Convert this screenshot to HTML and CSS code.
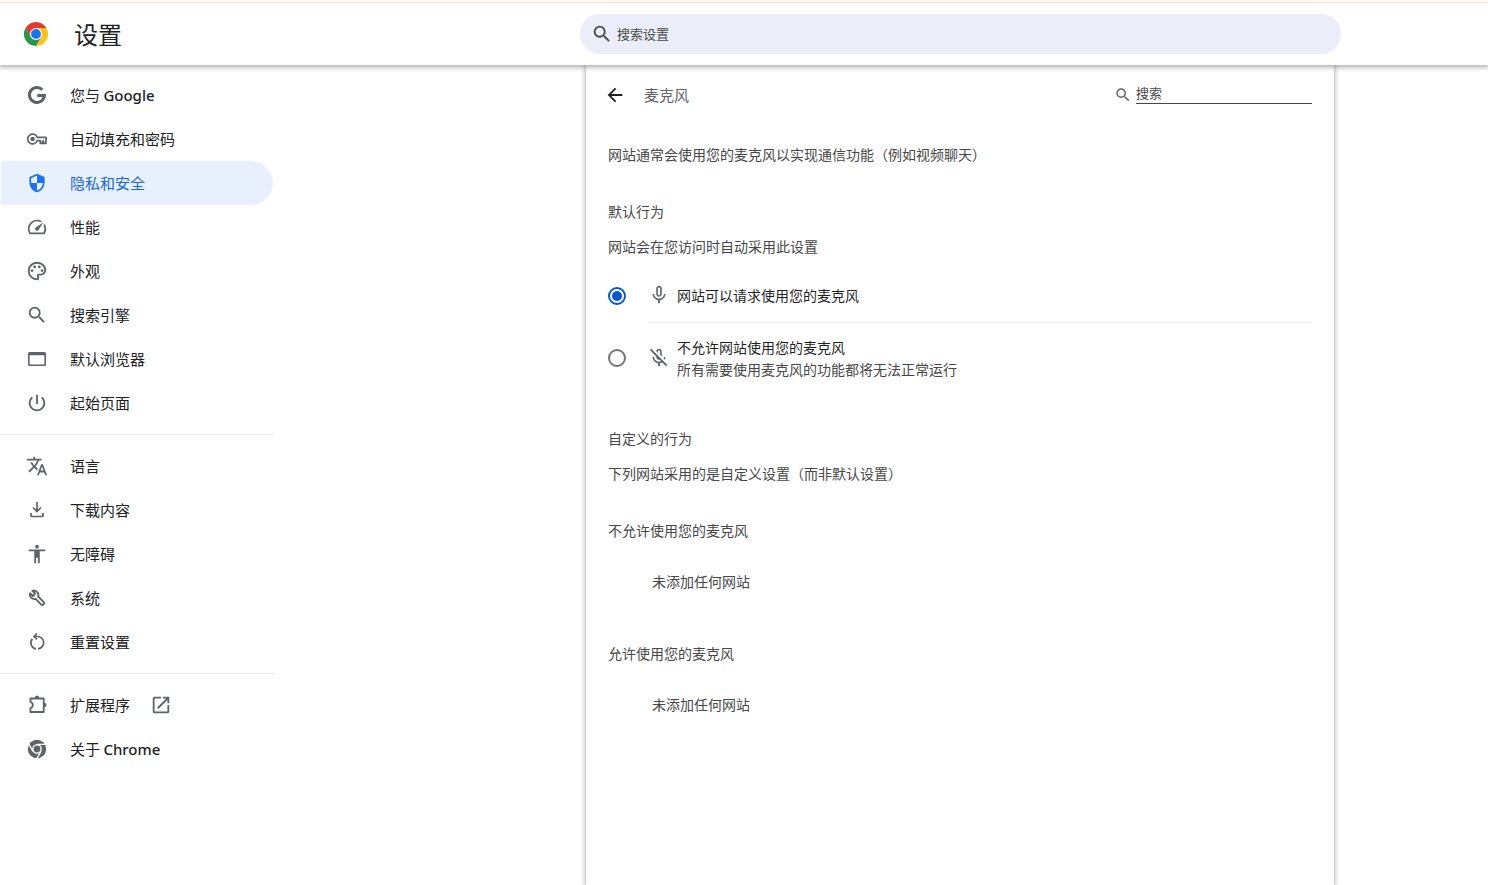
FILE: index.html
```html
<!DOCTYPE html>
<html lang="zh-CN">
<head>
<meta charset="utf-8">
<title>设置</title>
<link rel="stylesheet" href="styles.css">
</head>
<body>
<header class="toolbar">
  <div class="brand">
    <svg class="logo" viewBox="0 0 48 48" aria-hidden="true">
      <path fill="#e33b2e" d="M24 12H44.8A24 24 0 0 0 3.2 12L13.6 30Z"/>
      <path fill="#fcc31e" d="M34.4 30L24 48A24 24 0 0 0 44.8 12H24Z"/>
      <path fill="#279847" d="M13.6 30L3.2 12A24 24 0 0 0 24 48L34.4 30Z"/>
      <circle cx="24" cy="24" r="12" fill="#fff"/>
      <circle cx="24" cy="24" r="9.8" fill="#1a73e8"/>
    </svg>
    <h1 class="title">设置</h1>
  </div>
  <label class="search">
    <svg class="icon" viewBox="0 0 24 24" aria-hidden="true"><path d="M15.5 14h-.79l-.28-.27A6.47 6.47 0 0 0 16 9.5 6.5 6.5 0 1 0 9.5 16c1.61 0 3.09-.59 4.23-1.57l.27.28v.79l5 4.99L20.49 19l-4.99-5zm-6 0C7.01 14 5 11.99 5 9.5S7.01 5 9.5 5 14 7.01 14 9.5 11.99 14 9.5 14z"/></svg>
    <input class="search-input" type="text" placeholder="搜索设置" aria-label="搜索设置">
  </label>
</header>

<div class="layout">
  <nav class="menu" aria-label="设置">
    <a class="item" href="#people">
      <svg class="icon" viewBox="0 0 22 22" aria-hidden="true"><path fill="none" stroke="currentColor" stroke-width="3" d="M16.4 5.800A7.500 7.500 0 1 0 18.400 11.600H11.300"/></svg>
      <span>您与 <span class="latin">Google</span></span></a>
    <a class="item" href="#autofill">
      <svg class="icon" viewBox="0 0 22 22" aria-hidden="true"><path fill="none" stroke="currentColor" stroke-width="1.700" stroke-linejoin="round" d="M11.200 9.300A4.900 4.900 0 1 0 11.200 12.700H14.200V15.300H16.500V13.200H17.500V15.300H20V9.300Z"/><circle cx="6.600" cy="11" r="2.300"/></svg>
      <span>自动填充和密码</span></a>
    <a class="item selected" href="#privacy" aria-current="page">
      <svg class="icon" viewBox="-1 -1 26 26" aria-hidden="true"><path d="M12 1L3 5v6c0 5.55 3.84 10.74 9 12 5.16-1.26 9-6.45 9-12V5l-9-4zm0 10.99h7c-.53 4.12-3.28 7.79-7 8.94V12H5V6.3l7-3.11v8.8z"/></svg>
      <span>隐私和安全</span></a>
    <a class="item" href="#performance">
      <svg class="icon" viewBox="0 0 24 24" aria-hidden="true"><path d="M20.38 8.57l-1.23 1.85a8 8 0 0 1-.22 7.58H5.07A8 8 0 0 1 15.58 6.85l1.85-1.23A10 10 0 0 0 3.35 19a2 2 0 0 0 1.72 1h13.85a2 2 0 0 0 1.74-1 10 10 0 0 0-.27-10.44zM10.59 15.41a2 2 0 0 0 2.83 0l5.66-8.49-8.49 5.66a2 2 0 0 0 0 2.83z"/></svg>
      <span>性能</span></a>
    <a class="item" href="#appearance">
      <svg class="icon" viewBox="0 0 24 24" aria-hidden="true"><path d="M12 22C6.49 22 2 17.51 2 12S6.49 2 12 2s10 4.04 10 9c0 3.31-2.69 6-6 6h-1.77c-.28 0-.5.22-.5.5 0 .12.05.23.13.33.41.47.64 1.06.64 1.67A2.5 2.5 0 0 1 12 22zm0-18c-4.41 0-8 3.59-8 8s3.59 8 8 8c.28 0 .5-.22.5-.5a.54.54 0 0 0-.14-.35c-.41-.46-.63-1.05-.63-1.65a2.5 2.5 0 0 1 2.5-2.5H16c2.21 0 4-1.79 4-4 0-3.86-3.59-7-8-7z"/><circle cx="6.5" cy="11.5" r="1.5"/><circle cx="9.5" cy="7.5" r="1.5"/><circle cx="14.5" cy="7.5" r="1.5"/><circle cx="17.5" cy="11.5" r="1.5"/></svg>
      <span>外观</span></a>
    <a class="item" href="#search">
      <svg class="icon" viewBox="0 0 24 24" aria-hidden="true"><path d="M15.5 14h-.79l-.28-.27A6.47 6.47 0 0 0 16 9.5 6.5 6.5 0 1 0 9.5 16c1.61 0 3.09-.59 4.23-1.57l.27.28v.79l5 4.99L20.49 19l-4.99-5zm-6 0C7.01 14 5 11.99 5 9.5S7.01 5 9.5 5 14 7.01 14 9.5 11.99 14 9.5 14z"/></svg>
      <span>搜索引擎</span></a>
    <a class="item" href="#browser">
      <svg class="icon" viewBox="0 0 22 22" aria-hidden="true"><path fill-rule="evenodd" d="M3.5 4h15A1.5 1.5 0 0 1 20 5.5v11a1.5 1.5 0 0 1-1.5 1.5h-15A1.5 1.5 0 0 1 2 16.5v-11A1.5 1.5 0 0 1 3.5 4zM3.6 7.2v9.2h14.8V7.2z"/></svg>
      <span>默认浏览器</span></a>
    <a class="item" href="#startup">
      <svg class="icon" viewBox="0 0 24 24" aria-hidden="true"><path d="M13 3h-2v10h2V3zm4.83 2.17l-1.42 1.42C17.99 7.86 19 9.81 19 12c0 3.87-3.13 7-7 7s-7-3.13-7-7c0-2.19 1.01-4.14 2.58-5.42L6.17 5.17C4.23 6.82 3 9.26 3 12c0 4.97 4.03 9 9 9s9-4.03 9-9c0-2.74-1.23-5.18-3.17-6.83z"/></svg>
      <span>起始页面</span></a>
    <hr class="rule">
    <a class="item" href="#languages">
      <svg class="icon" viewBox="0 0 24 24" aria-hidden="true"><path d="M12.87 15.07l-2.54-2.51.03-.03c1.74-1.94 2.98-4.17 3.71-6.53H17V4h-7V2H8v2H1v1.99h11.17C11.5 7.92 10.44 9.75 9 11.35 8.07 10.32 7.3 9.19 6.69 8h-2c.73 1.63 1.73 3.17 2.98 4.56l-5.09 5.02L4 19l5-5 3.11 3.11.76-2.04zM18.5 10h-2L12 22h2l1.12-3h4.75L21 22h2l-4.5-12zm-2.62 7l1.62-4.33L19.12 17h-3.24z"/></svg>
      <span>语言</span></a>
    <a class="item" href="#downloads">
      <svg class="icon" viewBox="0 0 22 22" aria-hidden="true"><path fill="none" stroke="currentColor" stroke-width="1.7" d="M11 3v9.500M7 8.500l4 4 4-4M5 14v2.500q0 1 1 1h10q1 0 1-1V14"/></svg>
      <span>下载内容</span></a>
    <a class="item" href="#accessibility">
      <svg class="icon" viewBox="0 0 24 24" aria-hidden="true"><path d="M12 2c1.1 0 2 .9 2 2s-.9 2-2 2-2-.9-2-2 .9-2 2-2zm9 7h-6v13h-2v-6h-2v6H9V9H3V7h18v2z"/></svg>
      <span>无障碍</span></a>
    <a class="item" href="#system">
      <svg class="icon" viewBox="0 0 22 22" aria-hidden="true"><path fill="none" stroke="currentColor" stroke-width="1.8" stroke-linejoin="round" d="M6.300 3.800L9.200 6.700 6.900 9 4 6.200A4.600 4.600 0 0 0 9.700 11.900L15 17.300A1.500 1.500 0 0 0 17.500 14.900L12.200 9.500A4.600 4.600 0 0 0 6.300 3.800Z"/></svg>
      <span>系统</span></a>
    <a class="item" href="#reset">
      <svg class="icon" viewBox="0 0 22 22" aria-hidden="true"><path fill="none" stroke="currentColor" stroke-width="1.7" d="M12 17.800A6 6 0 0 0 11 5.500H8.500M10 17.800A6 6 0 0 1 6.400 7.900M11 2.500L8 5.500L11 8.500"/></svg>
      <span>重置设置</span></a>
    <hr class="rule">
    <a class="item" href="#extensions">
      <svg class="icon" viewBox="0 0 22 22" aria-hidden="true"><path fill="none" stroke="currentColor" stroke-width="1.8" stroke-linejoin="round" d="M4.400 4.500H17.700V18H4.400V14.200Q6.800 13.500 6.800 11T4.400 7.800Z"/><path d="M8.800 4a2.200 2.500 0 0 1 4.400 0zM18 8.800a2.500 2.200 0 0 1 0 4.400z"/></svg>
      <span>扩展程序</span>
      <svg class="icon external" viewBox="0 0 24 24" aria-hidden="true"><path d="M19 19H5V5h7V3H5a2 2 0 0 0-2 2v14a2 2 0 0 0 2 2h14c1.1 0 2-.9 2-2v-7h-2v7zM14 3v2h3.590l-9.830 9.830 1.410 1.410L19 6.410V10h2V3h-7z"/></svg></a>
    <a class="item" href="#about">
      <svg class="icon" viewBox="0 0 48 48" aria-hidden="true"><circle cx="24" cy="24" r="20"/><path fill="none" stroke="#fff" stroke-width="3" d="M24 14H43M15.300 29L5.800 12.500M32.700 29L23.200 45.500"/><circle cx="24" cy="24" r="9" stroke="#fff" stroke-width="3"/></svg>
      <span>关于 <span class="latin">Chrome</span></span></a>
  </nav>

  <main class="panel">
    <div class="panel-head">
      <button class="back" type="button" aria-label="返回">
        <svg class="icon" viewBox="0 0 24 24" aria-hidden="true"><path d="M20 11H7.830l5.590-5.590L12 4l-8 8 8 8 1.410-1.410L7.830 13H20v-2z"/></svg>
      </button>
      <h2 class="panel-title">麦克风</h2>
      <label class="filter">
        <svg class="icon small" viewBox="0 0 24 24" aria-hidden="true"><path d="M15.5 14h-.79l-.28-.27A6.47 6.47 0 0 0 16 9.5 6.5 6.5 0 1 0 9.5 16c1.61 0 3.09-.59 4.23-1.57l.27.28v.79l5 4.99L20.49 19l-4.99-5zm-6 0C7.01 14 5 11.99 5 9.5S7.01 5 9.5 5 14 7.01 14 9.5 11.99 14 9.5 14z"/></svg>
        <input class="filter-input" type="text" placeholder="搜索" aria-label="搜索">
      </label>
    </div>
    <p class="intro">网站通常会使用您的麦克风以实现通信功能（例如视频聊天）</p>

    <section class="section">
      <h3 class="heading">默认行为</h3>
      <p class="note">网站会在您访问时自动采用此设置</p>
      <div class="options">
        <div class="option">
          <input class="radio" type="radio" name="mic" id="ask" checked>
          <label class="choice" for="ask">
            <svg class="icon" viewBox="0 0 24 24" aria-hidden="true"><path d="M12 14c1.66 0 3-1.34 3-3V5c0-1.66-1.34-3-3-3S9 3.34 9 5v6c0 1.66 1.34 3 3 3zm-1.2-9.1a1.2 1.2 0 0 1 2.4 0v6.2a1.2 1.2 0 0 1-2.4 0zM17.3 11c0 3-2.54 5.1-5.3 5.1S6.7 14 6.7 11H5c0 3.41 2.72 6.23 6 6.72V21h2v-3.28c3.28-.48 6-3.3 6-6.72h-1.7z"/></svg>
            <span>网站可以请求使用您的麦克风</span>
          </label>
        </div>
        <div class="option tall">
          <input class="radio" type="radio" name="mic" id="block">
          <label class="choice" for="block">
            <svg class="icon" viewBox="0 0 24 24" aria-hidden="true"><path d="M10.8 4.9c0-.66.54-1.2 1.2-1.2s1.2.54 1.2 1.2l-.01 3.91L15 10.6V5c0-1.66-1.34-3-3-3-1.54 0-2.79 1.16-2.96 2.65l1.76 1.76V4.9zM19 11h-1.7c0 .58-.1 1.13-.27 1.64l1.27 1.27c.44-.88.7-1.87.7-2.91zM3.400 1.900L2 3.300l7 7V11c0 1.66 1.34 3 3 3 .23 0 .44-.03.65-.08l1.66 1.66c-.71.33-1.5.52-2.31.52-2.76 0-5.3-2.1-5.3-5.1H5c0 3.41 2.72 6.23 6 6.72V21h2v-3.28c.91-.13 1.77-.45 2.55-.9l4.2 4.2 1.41-1.41z"/></svg>
            <span>不允许网站使用您的麦克风<span class="detail">所有需要使用麦克风的功能都将无法正常运行</span></span>
          </label>
        </div>
      </div>
    </section>

    <section class="section">
      <h3 class="heading">自定义的行为</h3>
      <p class="note">下列网站采用的是自定义设置（而非默认设置）</p>
    </section>
    <section class="section">
      <h3 class="heading">不允许使用您的麦克风</h3>
      <p class="empty">未添加任何网站</p>
    </section>
    <section class="section">
      <h3 class="heading">允许使用您的麦克风</h3>
      <p class="empty">未添加任何网站</p>
    </section>
  </main>
</div>
</body>
</html>
```

FILE: styles.css
```css
* { box-sizing: border-box; }

body {
  margin: 0;
  min-height: 100vh;
  display: flex;
  flex-direction: column;
  background: #fff;
  color: #202124;
  font-family: "Noto Sans CJK SC", sans-serif;
  font-size: 14px;
  line-height: 22px;
}

h1, h2, h3, p { margin: 0; font-weight: 400; }
input, button { font: inherit; color: inherit; }

.icon {
  width: 22px;
  height: 22px;
  flex: none;
  display: block;
  fill: currentColor;
  color: #5f6368;
}
.icon.small { width: 18px; height: 18px; }
.icon.external { margin-left: -2px; }

.toolbar {
  position: relative;
  z-index: 1;
  display: grid;
  grid-template-columns: 580fr 761fr 147fr;
  align-items: center;
  height: 65px;
  padding-top: 3px;
  background: linear-gradient(#fff8f5 2px, #fae0d4 2px, #fae0d4 3px, #fff 3px);
  box-shadow: 0 1px 5px 1px rgba(0, 0, 0, .35);
}

.brand { display: flex; align-items: center; gap: 26px; padding-left: 24px; }
.logo { width: 24px; height: 24px; }
.title { font-size: 24px; line-height: 36px; }

.search {
  display: flex;
  align-items: center;
  gap: 4px;
  height: 40px;
  padding: 0 11px;
  border-radius: 20px;
  background: #ebeef8;
}
.search .icon { color: #474747; }
.search-input,
.filter-input {
  flex: 1;
  min-width: 0;
  padding: 0;
  border: 0;
  outline: 0;
  background: transparent;
  font-size: 13px;
  line-height: 20px;
}
::placeholder { color: #474747; opacity: 1; }

.layout {
  flex: 1;
  display: grid;
  grid-template-columns: 586fr 748fr 154fr;
}

.menu { width: 275px; padding: 8px 0; }
.item {
  display: flex;
  align-items: center;
  gap: 22px;
  height: 44px;
  margin: 0 2px 0 1px;
  padding-left: 25px;
  border-radius: 0 22px 22px 0;
  color: #202124;
  font-size: 15px;
  text-decoration: none;
}
.latin { font-family: "Noto Sans", sans-serif; font-weight: 500; }
.selected { background: #e8f0fe; color: #1967d2; }
.selected .icon { color: #1a73e8; }
.rule { height: 1px; margin: 9px 0; border: 0; background: #e8eaed; }

.panel {
  padding: 8px 22px;
  background: #fff;
  box-shadow: 0 0 5px 1px rgba(0, 0, 0, .3);
  color: #474747;
}
.panel-head { display: flex; align-items: center; height: 44px; }
.back { margin: 0 18px 0 -4px; padding: 0; border: 0; background: none; }
.back .icon { color: #202124; }
.panel-title { flex: 1; font-size: 15px; color: #5f6368; }
.filter { display: flex; align-items: center; gap: 4px; }
.filter-input {
  flex: none;
  width: 176px;
  margin-bottom: 4px;
  border-bottom: 1px solid #474747;
}

.intro { padding: 26px 0 35px; }
.heading { font-size: 14px; }
.note { padding-top: 13px; }
.section { padding-bottom: 35px; }

.options { padding-top: 11px; }
.option { display: flex; align-items: center; gap: 22px; }
.radio {
  appearance: none;
  flex: none;
  width: 18px;
  height: 18px;
  margin: 0;
  border: 2px solid #747775;
  border-radius: 50%;
}
.radio:checked {
  padding: 2px;
  border-color: #0b57d0;
  background: #0b57d0 content-box;
}
.choice {
  flex: 1;
  display: flex;
  align-items: center;
  gap: 7px;
  min-height: 55px;
  border-bottom: 1px solid #eceef0;
  color: #1f1f1f;
}
.tall .choice { min-height: 69px; border: 0; }
.detail { display: block; color: #474747; }

.empty { padding: 29px 0 15px 44px; }
```
